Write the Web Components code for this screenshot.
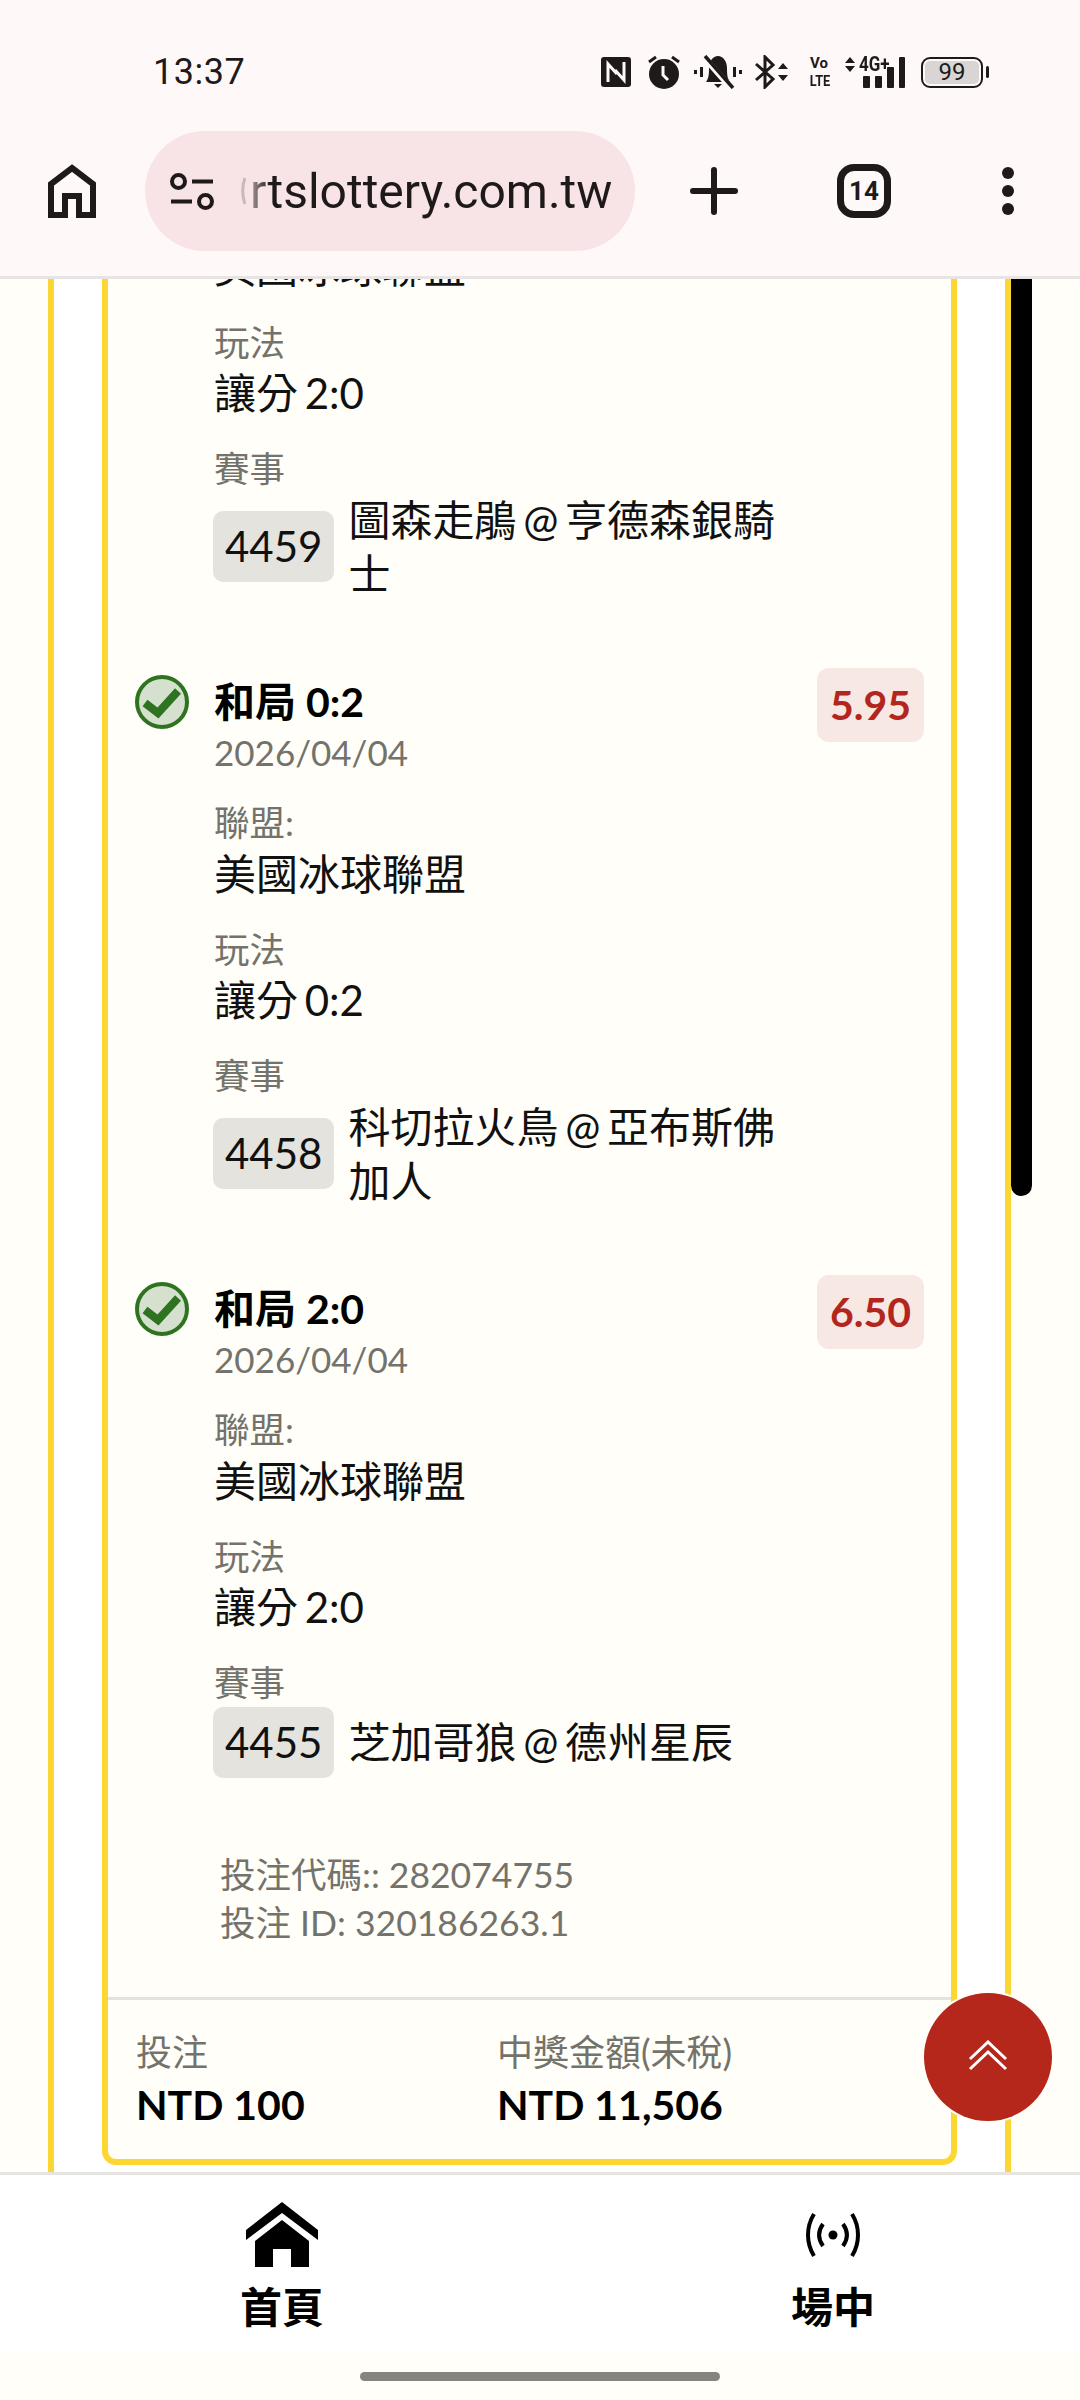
<!DOCTYPE html>
<html lang="zh-Hant">
<head>
<meta charset="utf-8">
<title>投注紀錄</title>
<style>
    html, body { margin: 0; padding: 0; background: #fffef8; }
    body { font-family: Lato, "Noto Sans CJK TC", sans-serif; }
</style>
</head>
<body>
<app-shell>
    <browser-chrome slot="top"></browser-chrome>

    <bet-slip>
        <bet-leg class="cut">
            <bet-field plain>美國冰球聯盟</bet-field>
            <bet-field label="玩法">讓分 2:0</bet-field>
            <bet-field label="賽事"><match-line code="4459">圖森走鵑 @ 亨德森銀騎士</match-line></bet-field>
        </bet-leg>
        <bet-leg title="和局 0:2" date="2026/04/04" odds="5.95">
            <bet-field label="聯盟:">美國冰球聯盟</bet-field>
            <bet-field label="玩法">讓分 0:2</bet-field>
            <bet-field label="賽事"><match-line code="4458">科切拉火鳥 @ 亞布斯佛加人</match-line></bet-field>
        </bet-leg>
        <bet-leg title="和局 2:0" date="2026/04/04" odds="6.50">
            <bet-field label="聯盟:">美國冰球聯盟</bet-field>
            <bet-field label="玩法">讓分 2:0</bet-field>
            <bet-field label="賽事"><match-line code="4455">芝加哥狼 @ 德州星辰</match-line></bet-field>
        </bet-leg>
    </bet-slip>

    <scroll-top slot="over"></scroll-top>
    <bottom-nav slot="bottom"></bottom-nav>
</app-shell>

<script>
// shell: chrome on top, clipped web view in the middle, nav at the bottom
class AppShell extends HTMLElement {
    connectedCallback() {
        this.attachShadow({ mode: 'open' });
        this.shadowRoot.innerHTML = `
            <style>
                :host {
                    display: flex;
                    flex-direction: column;
                    width: 1080px;
                    height: 2400px;
                    overflow: hidden;
                    background: #fffef8;
                }
                .view {
                    position: relative;
                    flex: 1;
                    min-height: 0;
                    overflow: hidden;
                }
                .thumb {
                    position: absolute;
                    top: 0;
                    left: 1011px;
                    width: 21px;
                    height: 917px;
                    background: #000;
                    border-radius: 0 0 11px 11px;
                }
            </style>
            <slot name="top"></slot>
            <div class="view">
                <slot></slot>
                <div class="thumb"></div>
                <slot name="over"></slot>
            </div>
            <slot name="bottom"></slot>
        `;
    }
}

class BrowserChrome extends HTMLElement {
    connectedCallback() {
        this.attachShadow({ mode: 'open' });
        this.shadowRoot.innerHTML = `
            <style>
                :host {
                    display: block;
                    height: 276px;
                    background: #fef8f8;
                    border-bottom: 3px solid #e9e4e4;
                    color: #1e1a1a;
                }
                svg { display: block; flex: none; }
                .status {
                    display: flex;
                    align-items: center;
                    height: 144px;
                    padding: 0 0 0 153px;
                    box-sizing: border-box;
                }
                .time {
                    font: 400 36px Roboto, sans-serif;
                    letter-spacing: 0.5px;
                    margin-right: auto;
                }
                .icons {
                    display: flex;
                    align-items: center;
                    margin-right: 92px;
                }
                .volte {
                    width: 22px;
                    margin: 0 15px 0 19px;
                    font: 700 15px/18px Roboto, sans-serif;
                    text-align: center;
                }
                .volte span { display: block; width: 22px; }
                .volte .lte { transform: scaleX(.85); }
                .signal {
                    position: relative;
                    width: 60px;
                    height: 34px;
                    margin-right: 16px;
                }
                .signal span {
                    position: absolute;
                    left: 14px;
                    top: -3px;
                    font: 700 20px/24px Roboto, sans-serif;
                    white-space: nowrap;
                    transform: scaleX(.85);
                    transform-origin: left center;
                }
                .battery {
                    position: relative;
                    display: flex;
                    width: 62px;
                    height: 31px;
                    padding: 2px;
                    margin-right: 5px;
                    border: 2.500px solid #1e1a1a;
                    border-radius: 9px;
                    box-sizing: border-box;
                }
                .battery span {
                    flex: 1;
                    border-radius: 5px;
                    background: #d9d5d5;
                    font: 400 24px/22px Roboto, sans-serif;
                    text-align: center;
                }
                .battery::after {
                    content: '';
                    position: absolute;
                    right: -8px;
                    top: 7px;
                    width: 3px;
                    height: 12px;
                    border-radius: 2px;
                    background: #1e1a1a;
                }
                .tools {
                    display: flex;
                    align-items: center;
                    height: 120px;
                    margin-top: -13px;
                    padding-left: 48px;
                }
                .pill {
                    display: flex;
                    align-items: center;
                    width: 490px;
                    height: 120px;
                    margin-left: 49px;
                    border-radius: 60px;
                    background: #f8e3e6;
                    box-sizing: border-box;
                    padding-left: 25px;
                }
                .sliver { margin: 0 4px 0 27px; }
                .url {
                    font: 400 48px Roboto, sans-serif;
                    white-space: nowrap;
                    -webkit-mask-image: linear-gradient(90deg, rgba(0,0,0,.35) 0, #000 20px);
                    mask-image: linear-gradient(90deg, rgba(0,0,0,.35) 0, #000 20px);
                }
                .plus { margin-left: 55px; }
                .tabs {
                    display: flex;
                    align-items: center;
                    justify-content: center;
                    width: 54px;
                    height: 54px;
                    margin-left: 99px;
                    border: 7px solid #1e1a1a;
                    border-radius: 17px;
                    box-sizing: border-box;
                    font: 700 26px Roboto, sans-serif;
                }
                .more { margin-left: 111px; }
            </style>
            <div class="status">
                <span class="time">13:37</span>
                <div class="icons">
                    <svg width="30" height="30" viewBox="0 0 30 30" style="margin-right:17px">
                        <rect width="30" height="30" rx="3" fill="#1e1a1a"/>
                        <path d="M7 25V7l9 10M23 5v18l-9-10" fill="none" stroke="#fef8f8" stroke-width="3"/>
                    </svg>
                    <svg width="32" height="34" viewBox="0 0 32 34" style="margin-right:14px">
                        <circle cx="16" cy="19" r="15" fill="#1e1a1a"/>
                        <path d="M15 11v9l5 5" fill="none" stroke="#fef8f8" stroke-width="3"/>
                        <path d="M1 7l7-5M31 7l-7-5" stroke="#1e1a1a" stroke-width="3"/>
                    </svg>
                    <svg width="48" height="34" viewBox="0 0 48 34" style="margin-right:13px">
                        <path d="M12 27C15 23 15 18 15 13C15 6 19 1 24 1C29 1 33 6 33 13C33 18 33 23 36 27Z" fill="#1e1a1a"/>
                        <path d="M20 29h8l-4 4z" fill="#1e1a1a"/>
                        <path d="M8 0L38 34" stroke="#fef8f8" stroke-width="6"/>
                        <path d="M11 1L39 33" stroke="#1e1a1a" stroke-width="3.500"/>
                        <path d="M1.500 15v4M7.500 12v10M40.500 12v10M46.500 15v4" stroke="#1e1a1a" stroke-width="3"/>
                    </svg>
                    <svg width="34" height="34" viewBox="0 0 34 34">
                        <path d="M1 9L18 24L10 32V2L18 10L1 25" fill="none" stroke="#1e1a1a" stroke-width="3"/>
                        <path d="M23 14l5-6 5 6zM23 20l5 6 5-6z" fill="#1e1a1a"/>
                    </svg>
                    <div class="volte"><span class="vo">Vo</span><span class="lte">LTE</span></div>
                    <div class="signal">
                        <svg width="60" height="34" viewBox="0 0 60 34">
                            <path d="M0 8l5-6 5 6zM0 11l5 6 5-6z" fill="#1e1a1a"/>
                            <rect x="18" y="21" width="7" height="12" rx="1" fill="#1e1a1a"/>
                            <rect x="30" y="21" width="7" height="12" rx="1" fill="#1e1a1a"/>
                            <rect x="42" y="12" width="7" height="21" rx="1" fill="#1e1a1a"/>
                            <rect x="54" y="2" width="6" height="31" rx="1" fill="#1e1a1a"/>
                        </svg>
                        <span>4G+</span>
                    </div>
                    <div class="battery"><span>99</span></div>
                </div>
            </div>
            <div class="tools">
                <svg width="48" height="54" viewBox="0 0 48 54">
                    <path d="M24 4L45 20V51H31V32H17V51H3V20Z" fill="none" stroke="#1e1a1a" stroke-width="6"/>
                </svg>
                <div class="pill">
                    <svg width="44" height="37" viewBox="0 0 44 37">
                        <circle cx="8.500" cy="8.500" r="6.500" fill="none" stroke="#1e1a1a" stroke-width="4"/>
                        <circle cx="35.500" cy="28.500" r="6.500" fill="none" stroke="#1e1a1a" stroke-width="4"/>
                        <path d="M22 8.500H43M1 28.500H22" stroke="#1e1a1a" stroke-width="4"/>
                    </svg>
                    <svg class="sliver" width="5" height="28" viewBox="0 0 5 28">
                        <path d="M4 1C1 8 1 20 4 27" fill="none" stroke="#c9b8ba" stroke-width="3"/>
                    </svg>
                    <span class="url">rtslottery.com.tw</span>
                </div>
                <svg class="plus" width="48" height="48" viewBox="0 0 48 48">
                    <path d="M24 3V45M3 24H45" stroke="#1e1a1a" stroke-width="6" stroke-linecap="round"/>
                </svg>
                <div class="tabs">14</div>
                <svg class="more" width="12" height="48" viewBox="0 0 12 48">
                    <circle cx="6" cy="6" r="6" fill="#1e1a1a"/>
                    <circle cx="6" cy="24" r="6" fill="#1e1a1a"/>
                    <circle cx="6" cy="42" r="6" fill="#1e1a1a"/>
                </svg>
            </div>
        `;
    }
}

// outer + inner yellow cards, total row at the end
class BetSlip extends HTMLElement {
    connectedCallback() {
        this.attachShadow({ mode: 'open' });
        this.shadowRoot.innerHTML = `
            <style>
                :host {
                    display: block;
                    width: 963px;
                    margin: -39.500px 0 0 48px;
                    padding: 0 48px;
                    box-sizing: border-box;
                    background: #fff;
                    border: solid #fcd734;
                    border-width: 0 6px;
                    height: 1940px;
                }
                .card {
                    background: #fffef8;
                    border: 6px solid #fcd734;
                    border-top: 0;
                    border-radius: 0 0 14px 14px;
                }
                .legs {
                    display: flex;
                    flex-direction: column;
                    gap: 74px;
                }
                .refs {
                    margin: 73.500px 0 50.500px;
                    padding-left: 112px;
                    font-size: 35.500px;
                    line-height: 47.500px;
                    color: #73726b;
                }
                .totals {
                    display: grid;
                    grid-template-columns: 361px 1fr;
                    padding: 28.500px 28px 24.500px;
                    border-top: 3px solid #e4e3de;
                }
                .label {
                    font-size: 36px;
                    line-height: 48px;
                    color: #73726b;
                }
                .amount {
                    font-size: 41px;
                    font-weight: 700;
                    line-height: 58px;
                    color: #000;
                }
            </style>
            <div class="card">
                <div class="legs"><slot></slot></div>
                <div class="refs">
                    <div>投注代碼:: 282074755</div>
                    <div>投注 ID: 320186263.1</div>
                </div>
                <div class="totals">
                    <div>
                        <div class="label">投注</div>
                        <div class="amount">NTD 100</div>
                    </div>
                    <div>
                        <div class="label">中獎金額(未稅)</div>
                        <div class="amount">NTD 11,506</div>
                    </div>
                </div>
            </div>
        `;
    }
}

class BetLeg extends HTMLElement {
    connectedCallback() {
        const title = this.getAttribute('title');
        this.removeAttribute('title');
        this.attachShadow({ mode: 'open' });
        const head = title ? `
            <div class="head">
                <svg class="check" width="54" height="54" viewBox="0 0 54 54">
                    <circle cx="27" cy="27" r="25" fill="#d5e0ce" stroke="#2e7420" stroke-width="4"/>
                    <path d="M10 28L23 38L43 16" fill="none" stroke="#2e7420" stroke-width="8"/>
                </svg>
                <div class="what">
                    <div class="title">${title}</div>
                    <div class="date">${this.getAttribute('date')}</div>
                </div>
                <div class="odds">${this.getAttribute('odds')}</div>
            </div>` : '';
        this.shadowRoot.innerHTML = `
            <style>
                :host {
                    display: block;
                    padding: 0 27px;
                }
                .head {
                    display: flex;
                    align-items: flex-start;
                    margin-bottom: 24.500px;
                }
                .check { flex: none; margin-right: 25px; }
                .what { flex: 1; }
                .title {
                    font-size: 41px;
                    font-weight: 700;
                    line-height: 54px;
                    color: #000;
                }
                .date {
                    font-size: 35px;
                    line-height: 47px;
                    color: #73726b;
                }
                .odds {
                    margin-top: -7px;
                    padding: 0 13px;
                    height: 74px;
                    line-height: 74px;
                    border-radius: 12px;
                    background: #f7e8e3;
                    color: #b3261e;
                    font-size: 41px;
                    font-weight: 700;
                }
                .body {
                    display: flex;
                    flex-direction: column;
                    gap: 26px;
                    padding-left: 79px;
                }
            </style>
            ${head}
            <div class="body"><slot></slot></div>
        `;
    }
}

class BetField extends HTMLElement {
    connectedCallback() {
        const label = this.getAttribute('label');
        this.attachShadow({ mode: 'open' });
        this.shadowRoot.innerHTML = `
            <style>
                :host { display: block; }
                .label {
                    font-size: 35.500px;
                    line-height: 46.500px;
                    color: #73726b;
                }
                .value {
                    font-size: 42px;
                    line-height: 54px;
                    word-spacing: -4px;
                    color: #111;
                }
            </style>
            ${label ? `<div class="label">${label}</div>` : ''}
            <div class="value"><slot></slot></div>
        `;
    }
}

class MatchLine extends HTMLElement {
    connectedCallback() {
        this.attachShadow({ mode: 'open' });
        this.shadowRoot.innerHTML = `
            <style>
                :host {
                    display: flex;
                    align-items: center;
                    gap: 14px;
                    width: 570px;
                    margin-left: -1px;
                }
                .code {
                    flex: none;
                    padding: 0 12px;
                    height: 71px;
                    line-height: 71px;
                    border-radius: 10px;
                    background: #e4e3de;
                }
            </style>
            <span class="code">${this.getAttribute('code')}</span>
            <span><slot></slot></span>
        `;
    }
}

class ScrollTop extends HTMLElement {
    connectedCallback() {
        this.attachShadow({ mode: 'open' });
        this.shadowRoot.innerHTML = `
            <style>
                :host {
                    position: absolute;
                    right: 28px;
                    bottom: 51px;
                    display: flex;
                    align-items: center;
                    justify-content: center;
                    width: 128px;
                    height: 128px;
                    border-radius: 50%;
                    background: #b5271a;
                    box-shadow: 0 0 0 2px #fffef8;
                }
                svg { display: block; margin-top: -2px; }
            </style>
            <svg width="40" height="32" viewBox="0 0 40 32">
                <path d="M2 19L20 2L38 19M2 29L20 12L38 29" fill="none" stroke="#fff" stroke-width="3"/>
            </svg>
        `;
    }
}

class BottomNav extends HTMLElement {
    connectedCallback() {
        this.attachShadow({ mode: 'open' });
        this.shadowRoot.innerHTML = `
            <style>
                :host {
                    display: block;
                    border-top: 3px solid #e6e5e2;
                    background: #fffef8;
                }
                .items {
                    display: grid;
                    grid-template-columns: 564px 1fr;
                    height: 177px;
                    background: #fff;
                }
                .item {
                    display: flex;
                    flex-direction: column;
                    align-items: center;
                    font-size: 42px;
                    font-weight: 700;
                    line-height: 56px;
                    color: #000;
                }
                .item + .item { padding-left: 22px; }
                .icon {
                    display: flex;
                    align-items: center;
                    height: 65px;
                    margin: 27px 0 12px;
                }
                .bar {
                    height: 48px;
                    display: flex;
                    align-items: center;
                    justify-content: center;
                }
                .handle {
                    width: 360px;
                    height: 9px;
                    border-radius: 5px;
                    background: #85847d;
                }
            </style>
            <div class="items">
                <div class="item">
                    <div class="icon">
                        <svg width="72" height="65" viewBox="0 0 72 65">
                            <path d="M36 0L72 28V38L36 11L0 38V28Z"/>
                            <path d="M36 18L63 39V65H45V47H27V65H9V39Z"/>
                        </svg>
                    </div>
                    首頁
                </div>
                <div class="item">
                    <div class="icon">
                        <svg width="54" height="46" viewBox="0 0 54 46" fill="none" stroke="#000" stroke-width="4">
                            <circle cx="27" cy="23" r="4.500" fill="#000" stroke="none"/>
                            <path d="M17 12c-5 7-5 15 0 22M37 12c5 7 5 15 0 22"/>
                            <path d="M8 2c-8 13-8 29 0 42M46 2c8 13 8 29 0 42"/>
                        </svg>
                    </div>
                    場中
                </div>
            </div>
            <div class="bar"><div class="handle"></div></div>
        `;
    }
}

customElements.define('app-shell', AppShell);
customElements.define('browser-chrome', BrowserChrome);
customElements.define('bet-slip', BetSlip);
customElements.define('bet-leg', BetLeg);
customElements.define('bet-field', BetField);
customElements.define('match-line', MatchLine);
customElements.define('scroll-top', ScrollTop);
customElements.define('bottom-nav', BottomNav);
</script>
</body>
</html>
